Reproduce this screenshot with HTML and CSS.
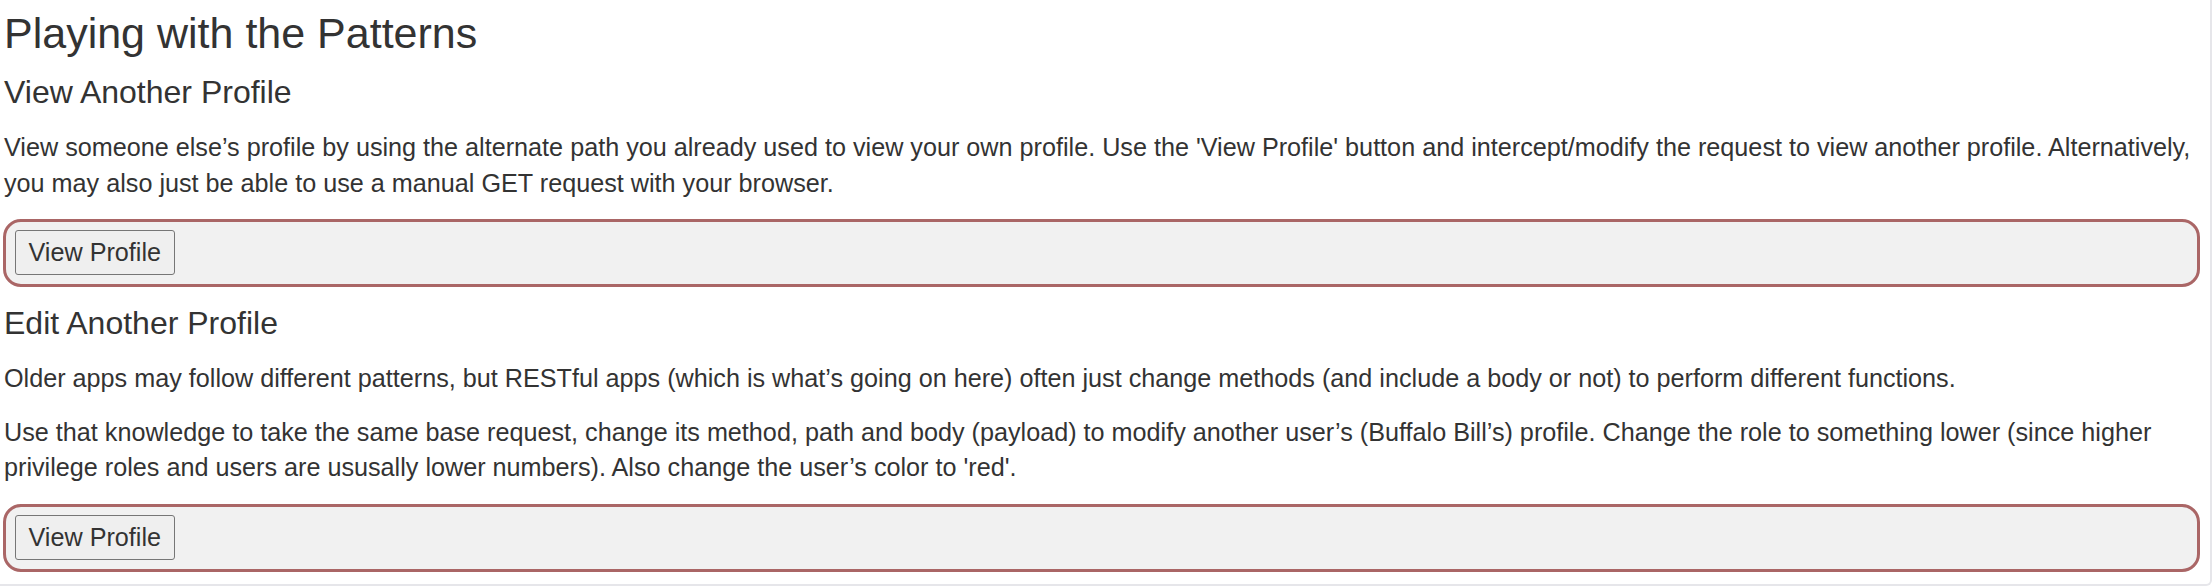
FILE: index.html
```html
<!DOCTYPE html>
<html>
<head>
<meta charset="utf-8">
<link rel="stylesheet" href="styles.css">
</head>
<body>
<div class="panel">
  <h2 class="title">Playing with the Patterns</h2>
  <h3 class="sub">View Another Profile</h3>
  <p class="text">View someone else’s profile by using the alternate path you already used to view your own profile. Use the 'View Profile' button and intercept/modify the request to view another profile. Alternatively, you may also just be able to use a manual GET request with your browser.</p>
  <div class="attack">
    <button class="btn" type="button">View Profile</button>
  </div>
  <h3 class="sub">Edit Another Profile</h3>
  <p class="text">Older apps may follow different patterns, but RESTful apps (which is what’s going on here) often just change methods (and include a body or not) to perform different functions.</p>
  <p class="text">Use that knowledge to take the same base request, change its method, path and body (payload) to modify another user’s (Buffalo Bill’s) profile. Change the role to something lower (since higher privilege roles and users are ususally lower numbers). Also change the user’s color to 'red'.</p>
  <div class="attack last">
    <button class="btn" type="button">View Profile</button>
  </div>
</div>
</body>
</html>
```
FILE: styles.css
```css
html, body {
  margin: 0;
  padding: 0;
  background: #ffffff;
}
body {
  font-family: "Liberation Sans", Arial, sans-serif;
  color: #333333;
  width: 2212px;
  height: 586px;
  overflow: hidden;
}
.panel {
  box-sizing: border-box;
  width: 2212px;
  height: 586px;
  padding: 11px 10px 0 4px;
  border-right: 2px solid #e6e6ea;
  border-bottom: 2px solid #e6e6ea;
  border-bottom-right-radius: 6px;
}
.title {
  font-size: 43px;
  line-height: 44px;
  font-weight: 400;
  margin: 0 0 21px;
}
.sub {
  font-size: 32px;
  line-height: 33px;
  font-weight: 400;
  margin: 0 0 21px;
}
.text {
  font-size: 25.2px;
  line-height: 35.6px;
  margin: 0 0 18px;
}
.attack {
  margin: 0 0 20px -1px;
  padding: 8px 9px 9px;
  background: #f1f1f1;
  border: 3px solid #aa6666;
  border-radius: 18px;
}
.attack.last {
  margin-bottom: 0;
}
.btn {
  display: block;
  box-sizing: border-box;
  height: 45px;
  padding: 0 12.5px;
  font-family: "Liberation Sans", Arial, sans-serif;
  font-size: 25.2px;
  color: #333333;
  background: #efefef;
  border: 1.5px solid #767676;
  border-radius: 3px;
}
```
